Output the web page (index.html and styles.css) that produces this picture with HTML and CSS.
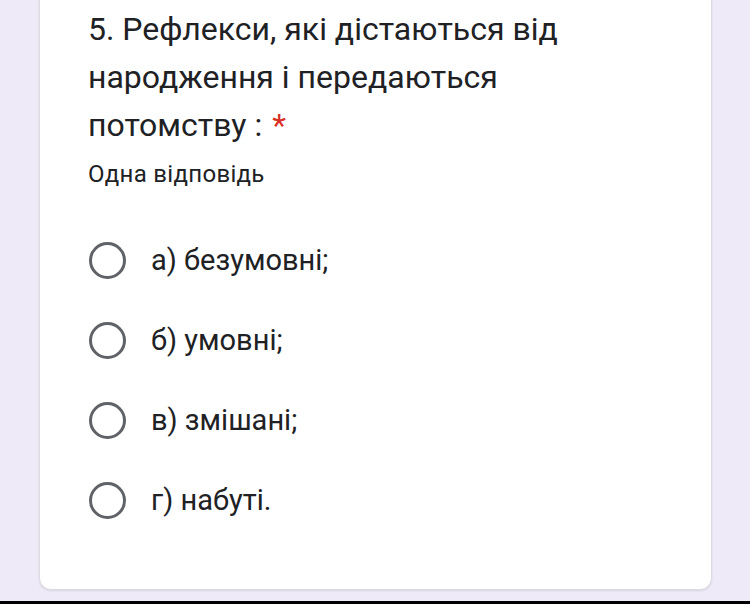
FILE: index.html
```html
<!DOCTYPE html>
<html lang="uk">
<head>
<meta charset="utf-8">
<link rel="stylesheet" href="styles.css">
</head>
<body>
<div class="page">
  <div class="card">
    <div class="title">5. Рефлекси, які дістаються від народження і передаються потомству :<span class="req">*</span></div>
    <div class="hint">Одна відповідь</div>
    <div class="options">
      <div class="opt"><span class="radio"></span><span class="label">а) безумовні;</span></div>
      <div class="opt"><span class="radio"></span><span class="label">б) умовні;</span></div>
      <div class="opt"><span class="radio"></span><span class="label">в) змішані;</span></div>
      <div class="opt"><span class="radio"></span><span class="label">г) набуті.</span></div>
    </div>
  </div>
</div>
<div class="bar"></div>
</body>
</html>
```
FILE: styles.css
```css
html, body {
  margin: 0;
  padding: 0;
  height: 604px;
  overflow: hidden;
  background: #eeeaf7;
  font-family: Roboto, "Noto Sans", sans-serif;
  color: #202124;
}
.page {
  display: flow-root;
  height: 601px;
  padding: 0 38px 0 39px;
  box-sizing: border-box;
}
.card {
  margin-top: -30px;
  height: 620px;
  box-sizing: border-box;
  background: #fff;
  border: 1px solid #dcdbe3;
  border-radius: 12px;
  box-shadow: 0 1px 2px rgba(60,64,67,0.12);
  padding: 34px 48px 0 48px;
}
.title {
  font-size: 32px;
  line-height: 48px;
  width: 490px;
}
.req {
  color: #d93025;
  line-height: 1;
  margin-left: 10px;
}
.hint {
  font-size: 24px;
  line-height: 32px;
  margin-top: 9px;
  letter-spacing: 0.3px;
}
.options {
  margin-top: 50px;
  display: flex;
  flex-direction: column;
  gap: 40px;
}
.opt {
  display: flex;
  align-items: center;
  height: 40px;
}
.radio {
  width: 31px;
  height: 31px;
  border: 3.5px solid #5f6368;
  border-radius: 50%;
  margin-left: 1px;
  flex: none;
}
.label {
  font-size: 29px;
  margin-left: 25px;
}
.bar {
  height: 3px;
  background: #000;
}
```
